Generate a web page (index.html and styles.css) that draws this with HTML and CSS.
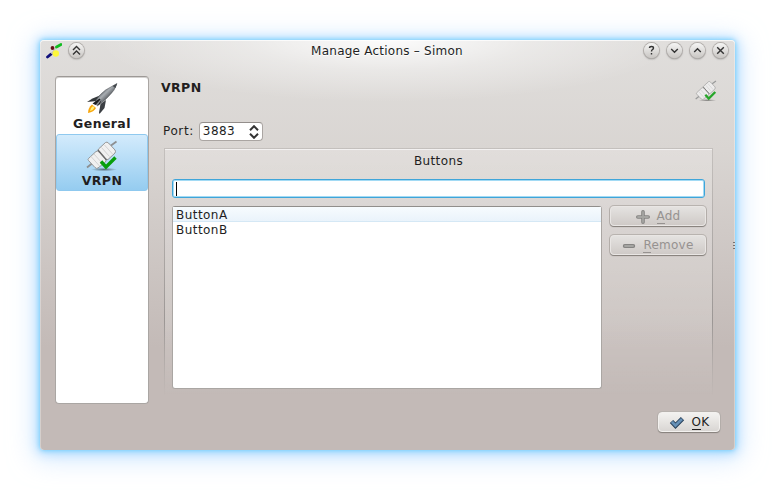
FILE: index.html
```
<!DOCTYPE html>
<html lang="en">
<head>
<meta charset="utf-8">
<title>Manage Actions – Simon</title>
<link rel="stylesheet" href="styles.css">
</head>
<body>
<svg class="defs" width="0" height="0" aria-hidden="true">
  <defs>
    <linearGradient id="metal" x1=".3" y1=".3" x2=".7" y2=".7"><stop offset="0" stop-color="#4d5257"/><stop offset=".4" stop-color="#a9aeb3"/><stop offset="1" stop-color="#3b3f43"/></linearGradient>
    <radialGradient id="shade"><stop offset="0" stop-color="#000" stop-opacity=".5"/><stop offset="1" stop-color="#000" stop-opacity="0"/></radialGradient>
    <symbol id="plug" viewBox="0 0 32 32">
      <ellipse cx="18" cy="29.500" rx="13" ry="1.800" fill="url(#shade)"/>
      <path d="M1 27.500l5-4M25 5.500l5.500-4" stroke="#8d8f90" stroke-width="1.800"/>
      <path d="M12.500 9l7-6.500q1.500-1 3 .5l6.500 7q1 1.500 0 3l-7 6.500q-1 .5-2-.5l-7.500-8q-1-1 0-2z" fill="#f0f0f0" stroke="#8b8b8b" stroke-width=".9"/>
      <path d="M2.500 18.500l7.500-7q1.500-1 3 .5l6.500 7q1 1.500 0 3l-7.500 6q-1.500 1-3-.5l-6.500-7q-1-1 0-2z" fill="#f0f0f0" stroke="#8b8b8b" stroke-width=".9"/>
      <path d="M5 16.500l8.500 9.500M8 14l8.500 9.500M15.500 7.500l8 9M18.500 5l8 9" stroke="#d2d2d2" stroke-width="1"/>
      <path d="M12 10l8.500 10" stroke="#6a6a6a" stroke-width="1.300"/>
      <path d="M15 21.500l5 5.500 9.500-9.500" fill="none" stroke="#079e0c" stroke-width="3.400"/>
    </symbol>
  </defs>
</svg>
<div class="window">
  <header class="titlebar">
    <svg class="app-icon" viewBox="0 0 16 16">
      <path d="M1.500 14L5 11.200" stroke="#10107c" stroke-width="2.800" stroke-linecap="round"/>
      <path d="M10.500 4L15 1.500" stroke="#11bd20" stroke-width="2.800" stroke-linecap="round"/>
      <path d="M5 11l5-6" stroke="#b9b9a8"/>
      <circle cx="6.500" cy="5" r="1.900" fill="#651018"/>
      <circle cx="9.800" cy="10.500" r="3.200" fill="#fdf83b"/>
    </svg>
    <span class="round"><svg viewBox="0 0 15 15"><path d="M4 7l3.500-3.500L11 7M4 11.500L7.500 8l3.500 3.500"/></svg></span>
    <h1>Manage Actions – Simon</h1>
    <div class="controls">
      <span class="round"><svg viewBox="0 0 15 15"><path d="M5.500 5q0-1.500 2-1.500t2 1.500q0 1-1 1.500-1 .6-1 2M7.500 10v1.500"/></svg></span>
      <span class="round"><svg viewBox="0 0 15 15"><path d="M4.200 6l3.300 3.300L10.800 6"/></svg></span>
      <span class="round"><svg viewBox="0 0 15 15"><path d="M4.200 9l3.300-3.300L10.800 9"/></svg></span>
      <span class="round"><svg viewBox="0 0 15 15"><path d="M4.200 4.200l6.600 6.600M10.800 4.200l-6.600 6.600"/></svg></span>
    </div>
  </header>
  <div class="body">
    <nav class="sidebar">
      <div class="page">
        <svg class="page-icon" viewBox="0 0 32 32">
          <path d="M6 22.500q-4 3-4 8.500 6-1 8-5z" fill="#f8a60d"/><path d="M7 24q-2.500 1.500-3 5 3.500-1 4.500-3.500z" fill="#fff27a"/>
          <path d="M15 13L6.500 16.500 1 20l10-1z" fill="#34383b"/>
          <path d="M20 18l-1.500 8L13.500 32l-.5-1.500L14.500 22z" fill="#3b3f43"/>
          <path d="M8.500 21Q12.500 13 19.500 8L31 1.500Q29 8.500 22.500 14.500 16.500 21 11 23.500z" fill="url(#metal)" stroke="#4a4e52" stroke-width=".5"/>
          <path d="M13.500 16.500L6.500 21.500l3 1.500 5-5.500z" fill="#1c1e20"/>
          <path d="M15.500 17.500l-4.500 7 3-2.500z" fill="#1c1e20"/>
          <path d="M26.500 4L31 1.500 29.500 6z" fill="#43474b"/>
        </svg>
        <span>General</span>
      </div>
      <div class="page selected">
        <svg class="page-icon"><use href="#plug"/></svg>
        <span>VRPN</span>
      </div>
    </nav>
    <main class="main">
      <div class="heading"><h2>VRPN</h2><svg class="head-icon"><use href="#plug"/></svg></div>
      <div class="port"><span>Port:</span>
        <div class="spin"><span>3883</span><svg viewBox="0 0 10 14"><path d="M1 5.200l4-4 4 4M1 8.800l4 4 4-4"/></svg></div>
      </div>
      <section class="group">
        <h3>Buttons</h3>
        <div class="field"><i class="caret"></i></div>
        <div class="columns">
          <ul class="list"><li class="current">ButtonA</li><li>ButtonB</li></ul>
          <div class="actions">
            <div class="btn disabled"><svg viewBox="0 0 14 14"><path d="M7 1.800v10.400M1.800 7h10.400" stroke="#858482" stroke-width="3.600" stroke-linecap="round"/><path d="M7 2v10M2 7h10" stroke="#a5a5a2" stroke-width="1.800" stroke-linecap="round"/></svg><span><u>A</u>dd</span></div>
            <div class="btn disabled"><svg viewBox="0 0 14 14"><path d="M2.700 7h8.600" stroke="#858482" stroke-width="3.800" stroke-linecap="round"/><path d="M3 7h8" stroke="#a5a5a2" stroke-width="1.800" stroke-linecap="round"/></svg><span><u>R</u>emove</span></div>
          </div>
        </div>
      </section>
    </main>
  </div>
  <footer class="footer">
    <div class="btn ok"><svg viewBox="0 0 16 14"><path d="M2.500 5.500l4 4.200 7-7" fill="none" stroke="#263e57" stroke-width="4.600"/><path d="M2.900 5.800l3.600 3.800 6.500-6.500" fill="none" stroke="#6690b6" stroke-width="2.800"/></svg><span><u>O</u>K</span></div>
  </footer>
  <i class="grip"></i>
</div>
</body>
</html>
```
FILE: styles.css
```
* { box-sizing: border-box; }
body {
  margin: 0;
  padding: 40px;
  height: 490px;
  overflow: hidden;
  background: #fff;
  color: #221e1e;
  font: 12px/15px "DejaVu Sans", sans-serif;
  letter-spacing: .24px;
}
h1, h2, h3, ul { margin: 0; padding: 0; font: inherit; list-style: none; }
.defs { position: absolute; }
svg { display: block; flex: none; }
.window {
  position: relative;
  display: flex;
  flex-direction: column;
  width: 695px;
  height: 410px;
  border-radius: 4px;
  background:
    radial-gradient(ellipse 290px 62px at 50% 0, rgba(255,255,255,.9), rgba(255,255,255,.35) 50%, rgba(255,255,255,0)),
    linear-gradient(#e0dedc, #d9d5d2 27%, #c3bab7 75%);
  box-shadow: inset 0 1px rgba(255,255,255,.75), inset 1px 0 rgba(255,255,255,.3), inset -1px 0 rgba(255,255,255,.3), 0 0 5px #66ccfd, 0 1px 12px 2px #a6d8fd, 0 4px 26px 6px rgba(190,220,255,.6);
}
.titlebar { display: flex; align-items: center; height: 22px; padding: 0 7px 0 6px; }
.app-icon { width: 16px; height: 16px; margin-right: 7px; }
.titlebar h1 { flex: 1; padding-left: 46px; text-align: center; text-shadow: 0 1px #fff; }
.controls { display: flex; gap: 8px; }
.round {
  width: 15px;
  height: 15px;
  margin-top: -2px;
  border-radius: 50%;
  background: linear-gradient(#f5f5f4, #c9c6c3);
  box-shadow: 0 0 0 1px #b3afac, 0 1px 2px #777;
}
.round svg { width: 15px; height: 15px; fill: none; stroke: #333; stroke-width: 1.400; }
.body { display: flex; height: 342px; padding: 14px 22px 0 15px; }
.sidebar {
  width: 94px;
  height: 328px;
  border: 1px solid #aaa6a3;
  border-top-color: #9d9996;
  border-radius: 4px;
  background: #fff;
  box-shadow: inset 0 1px #d5d3d1;
}
.page {
  display: flex;
  flex-direction: column;
  align-items: center;
  height: 57px;
  padding-top: 5px;
  font-size: 12.500px;
  font-weight: bold;
  letter-spacing: .4px;
}
.page span { margin-top: 2px; }
.page-icon { width: 32px; height: 32px; }
.page.selected {
  padding-top: 5px;
  border: 1px solid #8fc9ef;
  border-radius: 3px;
  background: linear-gradient(#d3ebfc, #95ccf0);
}
.page.selected span { margin-top: 1px; }
.main { flex: 1; padding-left: 15px; }
.heading { display: flex; justify-content: space-between; height: 46px; }
.heading h2 { margin: 4px 0 0 -3px; font-size: 12.500px; font-weight: bold; letter-spacing: .4px; }
.head-icon { width: 22px; height: 22px; margin: 4px -4px 0 0; opacity: .85; }
.port { display: flex; align-items: center; gap: 5px; height: 19px; margin-left: -1px; }
.spin {
  display: flex;
  align-items: center;
  justify-content: space-between;
  width: 64px;
  height: 19px;
  padding: 0 3px 0 3px;
  border: 1px solid #aaa5a2;
  border-top-color: #938e8b;
  border-radius: 4px;
  background: #fff;
  letter-spacing: .4px;
}
.port > span { letter-spacing: .6px; }
.spin svg { width: 10px; height: 14px; fill: none; stroke: #333; stroke-width: 2; }
.group {
  height: 247px;
  margin-top: 7px;
  padding: 5px 8px 0;
  border: 1px solid;
  border-width: 1px 1px 0;
  border-image: linear-gradient(#c4c0bd, #9c9795 70%, transparent) 1;
  background: linear-gradient(rgba(255,255,255,.2), rgba(255,255,255,.15) 70%, transparent);
  box-shadow: inset 0 1px rgba(255,255,255,.6);
}
.group h3 { text-align: center; letter-spacing: .4px; }
.field {
  height: 19px;
  margin: 10px -1px 0;
  padding: 2px 3px;
  border: 1px solid #3fa5d9;
  border-radius: 3px;
  background: #fff;
  box-shadow: inset 0 0 0 1px #a2daf4;
}
.caret { display: block; width: 1px; height: 14px; background: #000; }
.columns { display: flex; gap: 8px; margin: 8px -2px 0 -1px; }
.list {
  width: 430px;
  height: 183px;
  border: 1px solid #aaa6a3;
  border-top-color: #918e8b;
  border-radius: 3px;
  background: #fff;
  letter-spacing: .45px;
}
.list li { height: 15px; padding-left: 3px; line-height: 16px; }
.list .current { background: linear-gradient(#f7fbfe, #e9f3fb); box-shadow: inset 0 -1px #d5e8f5; }
.actions { display: flex; flex-direction: column; gap: 9px; }
.btn {
  display: flex;
  align-items: center;
  justify-content: center;
  gap: 7px;
  width: 96px;
  height: 20px;
  padding-top: 1px;
  border: 1px solid #f3f1ef;
  border-radius: 4px;
  background: linear-gradient(#f3f2f0, #d9d6d3);
  box-shadow: 0 1px 1px #857f7b, 0 0 0 1px #b8b3af;
  letter-spacing: .24px;
}
.btn svg { width: 14px; height: 14px; }
.btn u { text-decoration: none; box-shadow: 0 1px currentColor; }
.btn.disabled { color: #969290; border-color: #e9e6e4; background: linear-gradient(#e4e2e0, #cfcac7); }
.footer { display: flex; justify-content: flex-end; padding: 8px 15px 0 0; }
.btn.ok { width: 62px; }
.btn.ok svg { width: 16px; }
.grip {
  position: absolute;
  right: 0;
  top: 202px;
  width: 2px;
  height: 8px;
  background: repeating-linear-gradient(#77716e 0 1px, transparent 1px 3px);
}
```
